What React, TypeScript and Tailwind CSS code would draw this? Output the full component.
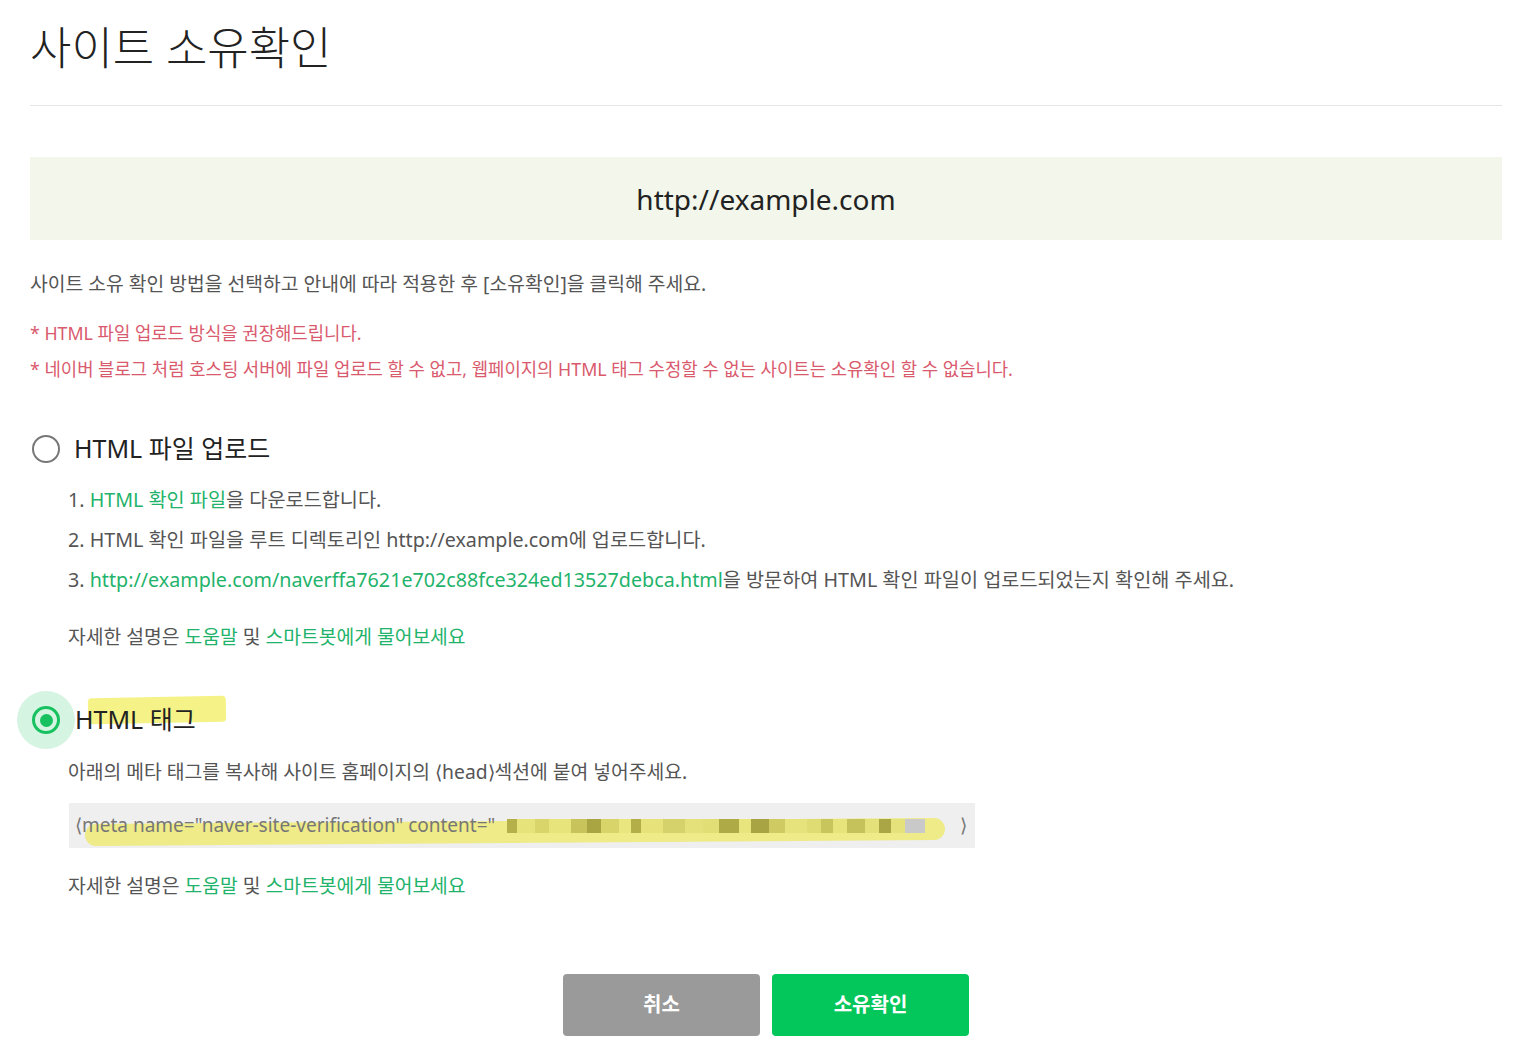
import React from "react";

const font = "font-['Noto_Sans','Noto_Sans_CJK_KR',sans-serif]";

const Link = ({ children }: { children: React.ReactNode }) => (
  <span className="text-[#1fb36b]">{children}</span>
);

const HelpLine = ({ className }: { className: string }) => (
  <p className={`pl-[38px] text-[19.3px] leading-[40px] text-[#555] ${className}`}>
    자세한 설명은 <Link>도움말</Link> 및 <Link>스마트봇에게 물어보세요</Link>
  </p>
);

// mosaic blocks of the blurred verification code
const mosaic: [number, string][] = [
  [10, "#b5b04a"], [18, "#e6e37a"], [14, "#d9d56a"], [22, "#e8e47c"], [16, "#c8c35a"],
  [14, "#a9a543"], [18, "#d8d46a"], [12, "#e9e57f"], [10, "#b3ae48"], [22, "#e7e37a"],
  [22, "#d5d16b"], [18, "#e4e07a"], [16, "#e2de76"], [20, "#aeaa45"], [12, "#e8e47e"],
  [18, "#a8a443"], [16, "#cfcb62"], [22, "#e7e37c"], [14, "#e0dc74"], [12, "#c9c55d"],
  [14, "#e8e47c"], [18, "#c6c25b"], [14, "#e5e17a"], [12, "#aaa645"], [14, "#e6e27b"],
  [20, "#c9c9c9"],
];

const App = () => {
  return (
    <div className={`min-h-screen bg-white pl-[30px] pr-[34px] ${font}`}>
      <h1 className="pt-[20px] text-[45px] leading-[55px] font-light text-[#222]">
        사이트 소유확인
      </h1>
      <div className="mt-[30px] h-px bg-[#e6e6e6]" />

      <div className="mt-[51px] flex h-[83px] items-center justify-center bg-[#f3f7eb] text-[28px] text-[#222]">
        http://example.com
      </div>

      <p className="mt-[30px] text-[19.3px] leading-[28px] text-[#555]">
        사이트 소유 확인 방법을 선택하고 안내에 따라 적용한 후 [소유확인]을 클릭해 주세요.
      </p>
      <div className="mt-[17px] text-[17.8px] leading-[36px] text-[#d95a6d]">
        <p>* HTML 파일 업로드 방식을 권장해드립니다.</p>
        <p>
          * 네이버 블로그 처럼 호스팅 서버에 파일 업로드 할 수 없고, 웹페이지의 HTML 태그 수정할 수
          없는 사이트는 소유확인 할 수 없습니다.
        </p>
      </div>

      {/* option 1 */}
      <label className="mt-[42px] flex h-[40px] items-center gap-[14px]">
        <span className="ml-[2px] h-[28px] w-[28px] rounded-full border-2 border-[#777]" />
        <span className="text-[25px] text-[#222]">HTML 파일 업로드</span>
      </label>
      <ol className="mt-[11px] pl-[38px] text-[19.7px] leading-[40px] text-[#555]">
        <li>
          1. <Link>HTML 확인 파일</Link>을 다운로드합니다.
        </li>
        <li>2. HTML 확인 파일을 루트 디렉토리인 http://example.com에 업로드합니다.</li>
        <li>
          3. <Link>http://example.com/naverffa7621e702c88fce324ed13527debca.html</Link>을 방문하여
          HTML 확인 파일이 업로드되었는지 확인해 주세요.
        </li>
      </ol>
      <HelpLine className="mt-[17px]" />

      {/* option 2 */}
      <label className="relative mt-[43px] flex h-[40px] items-center gap-[15px]">
        <span className="-ml-[13px] flex h-[58px] w-[58px] shrink-0 items-center justify-center rounded-full bg-[#d5f4e1]">
          <span className="flex h-[28px] w-[28px] items-center justify-center rounded-full border-[3px] border-[#17c160]">
            <span className="h-[13px] w-[13px] rounded-full bg-[#17c160]" />
          </span>
        </span>
        <span className="relative -ml-[15px] text-[25px] text-[#222]">
          <span className="absolute -top-[4px] left-[13px] h-[26px] w-[138px] -rotate-1 rounded-sm bg-[#f4f27a]/90" />
          <span className="relative">HTML 태그</span>
        </span>
      </label>
      <p className="mt-[12px] pl-[38px] text-[19.3px] leading-[40px] text-[#555]">
        아래의 메타 태그를 복사해 사이트 홈페이지의 ⟨head⟩섹션에 붙여 넣어주세요.
      </p>
      <div className="ml-[39px] mt-[11px] flex h-[45px] w-[906px] items-center bg-[#efefef] pl-[6px] text-[19px] text-[#777]">
        <span className="relative flex items-center">
          <span className="absolute left-[10px] top-[10px] h-[22px] w-[860px] -rotate-[0.4deg] rounded-full bg-[#eeea6e]/80" />
          <span className="relative">⟨meta name="naver-site-verification" content="</span>
          <span className="relative ml-[12px] flex h-[14px] items-center">
            {mosaic.map(([w, c], i) => (
              <span key={i} className="h-[14px]" style={{ width: w, backgroundColor: c }} />
            ))}
          </span>
        </span>
        <span className="ml-auto mr-[8px]">⟩</span>
      </div>
      <HelpLine className="mt-[18px]" />

      <div className="mt-[68px] flex justify-center gap-[12px] pb-[26px]">
        <button className="h-[62px] w-[197px] rounded-[4px] bg-[#9a9a9a] text-[20px] font-bold text-white">
          취소
        </button>
        <button className="h-[62px] w-[197px] rounded-[4px] bg-[#03c75a] text-[20px] font-bold text-white">
          소유확인
        </button>
      </div>
    </div>
  );
};

export default App;
